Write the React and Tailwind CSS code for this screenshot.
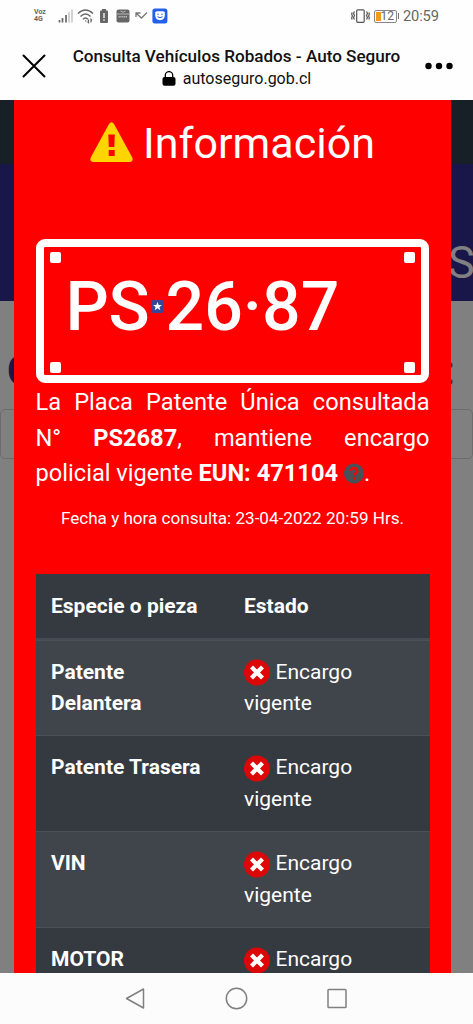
import React from "react";

function StatusBar() {
  return (
    <div className="flex h-8 items-center pl-[34px] pr-[33px] text-[#666]">
      <div className="w-[14px] text-[7px] font-bold leading-[7px]">
        <div>Voz</div>
        <div>4G</div>
      </div>
      <svg className="ml-[10px] h-4 w-4" viewBox="0 0 16 16">
        <path d="M1.500 12v2.500M4.500 10v4.500M8 7v7.500" stroke="#666" strokeWidth="1.700" />
        <path d="M11 4v10.500M14 1.500v13" stroke="#ccc" strokeWidth="1.700" />
      </svg>
      <svg className="ml-[3px] h-4 w-[18px]" viewBox="0 0 18 16" fill="none" stroke="#666" strokeWidth="1.500">
        <path d="M1 5.500Q8.500-1.500 16 5.500M3.500 8.500Q8.500 3.500 13.500 8.500M6 11.300Q8.500 8.500 11 11.300" />
        <path d="M8 13h1.500M11.500 11.500v3l-1-1M14 14.500v-3l1 1" strokeWidth="1.200" />
      </svg>
      <svg className="ml-[4px] h-4 w-[10px]" viewBox="0 0 10 16">
        <path d="M3 1h4v1.500h1q1 0 1 1V14q0 1-1 1H2q-1 0-1-1V3.500q0-1 1-1h1z" fill="#666" />
        <path d="M5 5v5M5 11.200v1.500" stroke="#fff" strokeWidth="1.300" />
      </svg>
      <svg className="ml-[7px] h-4 w-[14px]" viewBox="0 0 14 16">
        <rect x=".5" y="1.500" width="13" height="13" rx="2" fill="#666" />
        <path d="M1 6h12M4.500 3q2.500 2.500 5 0" stroke="#ccc" strokeWidth=".8" fill="none" />
        <path d="M2.500 8.800h9" stroke="#bbb" strokeWidth="1.600" strokeDasharray="1.300 .5" />
      </svg>
      <svg className="ml-[5px] h-4 w-[13px]" viewBox="0 0 13 16" fill="none" stroke="#777" strokeWidth="1.300">
        <path d="M1 9V5h4.500M1.200 5.200L6.500 10 12 4.500" />
      </svg>
      <svg className="ml-[4px] h-4 w-4" viewBox="0 0 16 16">
        <rect x=".4" y=".5" width="15" height="15" rx="2.500" fill="#2460e8" />
        <path d="M3.200 4l2-.8h5.600l2 .8v3.500q-.3 4.500-4.800 4.700Q3.500 12 3.200 7.500z" fill="#fff" />
        <path d="M6 5.500v1.500M10 5.500v1.500M5.500 8.700q2.500 2 5 0" stroke="#2460e8" fill="none" />
      </svg>
      <svg className="ml-auto h-4 w-[19px]" viewBox="0 0 19 16" fill="none" stroke="#555" strokeWidth="1.200">
        <rect x="5.700" y="1.800" width="7.500" height="12.500" rx="1" />
        <path d="M3.500 3.500l-1 2 1 2-1 2 1 2M1.200 4.500l-.6 1.500.8 2-.8 2 .6 1.500M15.500 3.500l1 2-1 2 1 2-1 2M17.800 4.500l.6 1.500-.8 2 .8 2-.6 1.500" />
      </svg>
      <div className="ml-[4px] flex h-[13px] w-[23px] items-center rounded-[2px] border border-[#888] p-px">
        <div className="h-full w-[5px] shrink-0 bg-[#f39a20]" />
        <span className="text-[12px] leading-none">12</span>
      </div>
      <div className="ml-px h-[6px] w-[1.500px] bg-[#777]" />
      <span className="ml-[4px] w-[37px] whitespace-nowrap text-[14.700px] leading-none tracking-[-0.15px]">20:59</span>
    </div>
  );
}

function BrowserHeader() {
  return (
    <div className="flex h-[68px] items-start justify-between pl-[22px] pr-[20px] text-[#111]">
      <svg className="mt-[22px] h-6 w-6" viewBox="0 0 24 24" stroke="#000" strokeWidth="2" strokeLinecap="round">
        <path d="M1.500 1.500l21 21M22.500 1.500l-21 21" />
      </svg>
      <div className="flex flex-col items-center pl-[2px] pt-[13px]">
        <h1 className="whitespace-nowrap text-[17.100px] font-medium leading-[23px]">Consulta Vehículos Robados - Auto Seguro</h1>
        <div className="flex items-center pt-px">
          <svg className="mr-[7px] h-4 w-[14px]" viewBox="0 0 14 16">
            <rect x=".5" y="6" width="13" height="8.700" rx="2" fill="#000" />
            <path d="M3.300 6.500V4.300a3.700 3.700 0 0 1 7.400 0v2.200" fill="none" stroke="#000" strokeWidth="1.300" />
          </svg>
          <span className="text-[16px] leading-[20px]">autoseguro.gob.cl</span>
        </div>
      </div>
      <svg className="mt-[30px] h-[8px] w-[28px]" viewBox="0 0 28 8">
        <circle cx="3.500" cy="4" r="3.200" />
        <circle cx="14" cy="4" r="3.200" />
        <circle cx="24.500" cy="4" r="3.200" />
      </svg>
    </div>
  );
}

function PageBehind() {
  return (
    <div className="h-full bg-[#808080]">
      <div className="h-16 bg-[#172026]" />
      <div className="flex h-[137px] justify-end overflow-hidden bg-[#191749] pt-[72px] text-[45px] leading-[54px] text-[#808080]">
        <span className="w-[24px] -translate-x-px">S</span>
      </div>
      <div className="flex h-[108px] justify-between pl-[7px] pr-[18px] pt-[45px] text-[42px] font-bold leading-[50px] text-[#191749]">
        <span>C</span>
        <span className="text-[#332f40]">:</span>
      </div>
      <div className="h-[50px] rounded-[5px] border border-[#6c6c6c]" />
    </div>
  );
}

function Corner() {
  return <div className="h-[11px] w-[11px] rounded-[2px] bg-white" />;
}

function Plate() {
  return (
    <div className="flex h-[144px] w-[393.500px] shrink-0 flex-col justify-between rounded-[9px] border-[8px] border-white px-[6px] pb-[2px] pt-[5px]">
      <div className="flex justify-between"><Corner /><Corner /></div>
      <div className="mb-[12px] flex h-[76px] items-center pl-[16px] text-[68px] font-medium leading-none">
        <span className="w-[85px] tracking-[-0.5px]">PS</span>
        <svg className="h-[13px] w-[13px] shrink-0" viewBox="0 0 13 13">
          <rect width="13" height="13" rx="3" fill="#34479b" />
          <path d="M6.500 1.800l1.150 3.200H11L8.400 7l.95 3.300L6.500 8.300l-2.850 2L4.600 7 2 5h3.350z" fill="#fff" />
        </svg>
        <span className="ml-[2px] whitespace-nowrap">26·87</span>
      </div>
      <div className="flex justify-between"><Corner /><Corner /></div>
    </div>
  );
}

function CrossBadge() {
  return (
    <svg className="mr-[5.500px] inline-block h-[27px] w-[26px] align-[-7.500px]" viewBox="0 0 26 27">
      <circle cx="13" cy="13.500" r="13" fill="#dc0808" />
      <path d="M7.500 8l11 11M18.500 8l-11 11" stroke="#fff" strokeWidth="4.200" />
    </svg>
  );
}

function Row({ label, shade }) {
  return (
    <div className={`flex h-[95.900px] shrink-0 border-t border-[#4b5157] pl-[15.500px] pt-[16px] ${shade}`}>
      <div className="w-[193px] pr-10 font-bold">{label}</div>
      <div className="w-[130px]"><CrossBadge />Encargo vigente</div>
    </div>
  );
}

function InfoDialog() {
  return (
    <div className="absolute inset-y-0 left-[14px] right-[22px] flex flex-col overflow-hidden bg-[#ff0000] px-[21.500px] text-white">
      <div className="flex h-[139px] shrink-0 items-start justify-center pt-[17px]">
        <svg className="mr-[10px] mt-[5px] h-[40px] w-[43px]" viewBox="0 0 43 40">
          <path d="M19 2q2.500-3.500 5 0l18 33q2 4.500-2.500 5h-36Q-1 39.500 1 35z" fill="#ffd500" />
          <path d="M18.300 12.500h6.500L24.300 25h-5.500zM18.700 28h6v6h-6z" fill="#f00" />
        </svg>
        <h2 className="text-[43px] leading-[52px]">Información</h2>
      </div>
      <Plate />
      <p className="mt-[2px] shrink-0 text-justify text-[23.650px] leading-[35.500px]">
        La Placa Patente Única consultada N° <b>PS2687</b>, mantiene encargo policial vigente <b>EUN: 471104</b>{" "}
        <svg className="inline-block h-[21px] w-[20px] align-[-3px]" viewBox="0 0 20 21">
          <circle cx="10" cy="10.500" r="10" fill="#495057" />
          <path d="M6.700 8Q7 5.200 10 5.200T13.300 8Q13.300 9.500 11.500 10.500 10.200 11.200 10.200 12.600M10.200 14.300v2.400" fill="none" stroke="#f00" strokeWidth="2.300" />
        </svg>.
      </p>
      <p className="mt-[14px] shrink-0 text-center text-[17.100px] leading-[25px]">Fecha y hora consulta: 23-04-2022 20:59 Hrs.</p>
      <div className="mt-[43.500px] flex shrink-0 flex-col text-[21px] leading-[31.500px]">
        <div className="flex h-[65.500px] shrink-0 border-b-[2px] border-[#454b52] bg-[#343a40] pl-[15.500px] pt-[17px] font-bold">
          <div className="w-[193px]">Especie o pieza</div>
          <div>Estado</div>
        </div>
        <Row label="Patente Delantera" shade="bg-[#40454b]" />
        <Row label={<span className="whitespace-nowrap">Patente Trasera</span>} shade="bg-[#343a40]" />
        <Row label="VIN" shade="bg-[#40454b]" />
        <Row label="MOTOR" shade="bg-[#343a40]" />
      </div>
    </div>
  );
}

function NavigationBar() {
  return (
    <div className="flex h-[51px] items-start justify-between bg-[#fcfcfc] pl-[125px] pr-[125px] pt-[14px]">
      <svg className="h-[23px] w-[21px]" viewBox="0 0 21 23" fill="none" stroke="#808080" strokeWidth="1.500">
        <path d="M1.500 11.500L18.500 2v19z" strokeLinejoin="round" />
      </svg>
      <svg className="h-[23px] w-[23px] translate-x-px" viewBox="0 0 23 23" fill="none" stroke="#808080" strokeWidth="1.500">
        <circle cx="11.500" cy="11.500" r="10.200" />
      </svg>
      <svg className="h-[23px] w-[23px]" viewBox="0 0 23 23" fill="none" stroke="#808080" strokeWidth="1.500">
        <rect x="3" y="2.500" width="18" height="18" rx=".8" />
      </svg>
    </div>
  );
}

export default function App() {
  return (
    <div className="flex h-[1024px] w-[473px] flex-col overflow-hidden bg-[#fefefe] font-['Roboto',sans-serif]">
      <StatusBar />
      <BrowserHeader />
      <main className="relative h-[873px] shrink-0">
        <PageBehind />
        <InfoDialog />
      </main>
      <NavigationBar />
    </div>
  );
}
